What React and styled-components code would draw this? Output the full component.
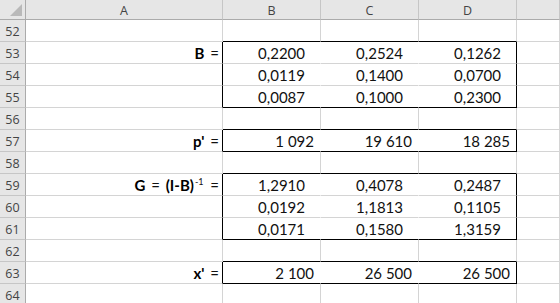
import React from 'react';
import styled, { createGlobalStyle } from 'styled-components';

const GRID = '#d4d4d4';
const HEAD_LINE = '#c6c6c6';
const INK = '#000000';

const Global = createGlobalStyle`
    html, body {
        margin: 0;
        padding: 0;
        background: #ffffff;
        overflow: hidden;
    }
`;

const Sheet = styled.div`
    display: grid;
    grid-template-columns: 26px 197px 98px 98px 98px 1fr;
    grid-auto-rows: 22px;
    grid-template-rows: 20px;
    width: 560px;
    height: 303px;
    overflow: hidden;
    font-family: Lato, "Open Sans", sans-serif;
`;

const Corner = styled.div`
    background: #e6e6e6;
    border-right: 1px solid #ababab;
    border-bottom: 1px solid #ababab;
    box-sizing: border-box;
    display: flex;
    align-items: flex-end;
    justify-content: flex-end;
    padding: 0 3px 3px 0;
`;

const ColHead = styled.div`
    background: #e6e6e6;
    border-right: 1px solid ${HEAD_LINE};
    border-bottom: 1px solid #ababab;
    box-sizing: border-box;
    display: flex;
    align-items: center;
    justify-content: center;
    font-family: "Open Sans", "Noto Sans", sans-serif;
    font-size: 12.5px;
    color: #444444;
    padding-top: 1px;
`;

const RowHead = styled.div`
    background: #e6e6e6;
    border-right: 1px solid #ababab;
    border-bottom: 1px solid ${HEAD_LINE};
    box-sizing: border-box;
    display: flex;
    align-items: center;
    justify-content: center;
    font-family: "Open Sans", "Noto Sans", sans-serif;
    font-size: 12.5px;
    color: #444444;
    padding-top: 1px;
`;

const Cell = styled.div`
    box-sizing: border-box;
    border-right: 1px solid ${p => p.$right || GRID};
    border-bottom: 1px solid ${p => p.$bottom || GRID};
    display: flex;
    align-items: flex-end;
    justify-content: flex-end;
    padding: 0 ${p => p.$pad || 3}px 1px 0;
    font-size: 15px;
    line-height: 18px;
    color: #111111;
    white-space: nowrap;
`;

const Bold = styled.b`
    font-weight: 700;
    color: ${INK};
`;

const Sup = styled.sup`
    font-size: 9px;
    line-height: 0;
    vertical-align: 6px;
    margin: 0 1px;
`;

const Label = styled.span`
    word-spacing: 2px;
`;

const rows = [
    { n: 52 },
    { n: 53, box: 1, label: <><Bold>B</Bold> =</>, vals: ['0,2200', '0,2524', '0,1262'], pad: 15 },
    { n: 54, box: 1, vals: ['0,0119', '0,1400', '0,0700'], pad: 15 },
    { n: 55, box: 1, vals: ['0,0087', '0,1000', '0,2300'], pad: 15 },
    { n: 56 },
    { n: 57, box: 2, label: <><Bold>p'</Bold> =</>, vals: ['1 092', '19 610', '18 285'], pad: 6 },
    { n: 58 },
    {
        n: 59,
        box: 3,
        label: <><Bold>G</Bold> = <Bold>(I-B)</Bold><Sup>-1</Sup> =</>,
        vals: ['1,2910', '0,4078', '0,2487'],
        pad: 15,
    },
    { n: 60, box: 3, vals: ['0,0192', '1,1813', '0,1105'], pad: 15 },
    { n: 61, box: 3, vals: ['0,0171', '0,1580', '1,3159'], pad: 15 },
    { n: 62 },
    { n: 63, box: 4, label: <><Bold>x'</Bold> =</>, vals: ['2 100', '26 500', '26 500'], pad: 6 },
    { n: 64 },
];

const CornerMark = () => (
    <svg width="12" height="12" viewBox="0 0 12 12">
        <polygon points="12,0 12,12 0,12" fill="#b9b9b9" />
    </svg>
);

function Row({ row, next }) {
    const inBox = !!row.box;
    const closesBox = inBox && (!next || next.box !== row.box);
    const opensBox = !inBox && next && next.box;
    const bottom = closesBox || opensBox ? INK : GRID;
    const vals = row.vals || ['', '', ''];

    return (
        <>
            <RowHead>{row.n}</RowHead>
            <Cell $right={inBox ? INK : GRID}>
                {row.label && <Label>{row.label}</Label>}
            </Cell>
            {vals.map((v, i) => (
                <Cell
                    key={i}
                    $pad={row.pad}
                    $bottom={bottom}
                    $right={inBox ? (i === 2 ? INK : '#ffffff') : GRID}
                >
                    {v}
                </Cell>
            ))}
            <Cell />
        </>
    );
}

export default function App() {
    return (
        <>
            <Global />
            <Sheet>
                <Corner><CornerMark /></Corner>
                <ColHead>A</ColHead>
                <ColHead>B</ColHead>
                <ColHead>C</ColHead>
                <ColHead>D</ColHead>
                <ColHead />
                {rows.map((r, i) => (
                    <Row key={r.n} row={r} next={rows[i + 1]} />
                ))}
            </Sheet>
        </>
    );
}
